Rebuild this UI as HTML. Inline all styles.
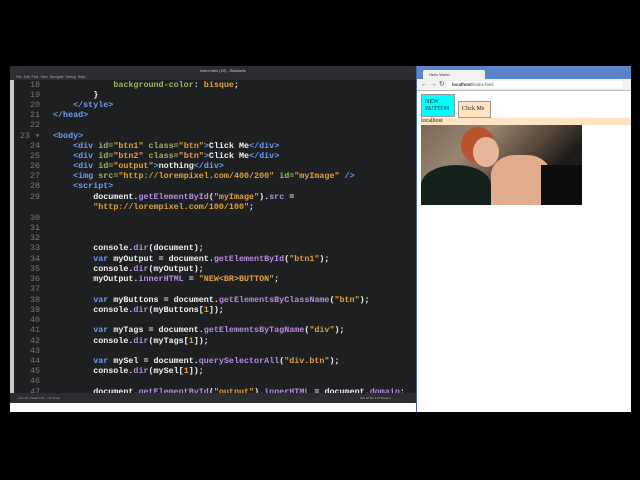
<!DOCTYPE html>
<html><head><style>
body{margin:0;width:640px;height:480px;background:#000;position:relative;overflow:hidden;font-family:"Liberation Sans",sans-serif}
#ed{position:absolute;left:10px;top:66px;width:406px;height:346px;background:#1d1f21;overflow:hidden}
#tb{position:absolute;left:0;top:0;width:406px;height:14px;background:#2b2d30}
#tb .t{position:absolute;left:190px;top:2px;font-size:4px;color:#ccc}
#tb .m{position:absolute;left:6px;top:9px;font-size:3.5px;color:#aaa;white-space:pre}
#side{position:absolute;left:0;top:14px;width:4px;height:313px;background:#c9cbcc}
#code{position:absolute;left:0;top:14px;width:406px;height:313px;overflow:hidden}
.l{position:absolute;left:0;font-family:"Liberation Mono",monospace;font-size:8.4px;white-space:pre;color:#f2f2f2;line-height:10px;font-weight:bold}
.n{position:absolute;width:30px;text-align:right;color:#777;font-family:"Liberation Mono",monospace;font-size:8.4px;line-height:10px}
.tg{color:#6c9ef8}.a{color:#9fb55a}.s{color:#e2a13e}.f{color:#b98ce0}.k{color:#6c9ef8}.o{color:#e2a13e}
#sb{position:absolute;left:0;top:327px;width:406px;height:10px;background:#2b2d30;font-size:3px;color:#aaa}
#bot{position:absolute;left:0;top:337px;width:406px;height:9px;background:#fff}
#br{position:absolute;left:416px;top:66px;width:214px;height:346px;background:#fff;border-left:1px solid #4466aa}
#tabs{position:absolute;left:0;top:0;width:214px;height:13px;background:#5b83c9}
#tab{position:absolute;left:6px;top:4px;width:62px;height:9px;background:#f2f2f2;border-radius:2px 2px 0 0;font-size:4px;color:#333;line-height:9px;padding-left:6px;box-sizing:border-box}
#url{position:absolute;left:0;top:13px;width:214px;height:11px;background:#f2f2f2;border-bottom:1px solid #bbb}
#urlbox{position:absolute;left:30px;top:2px;width:170px;height:7px;background:#fff;font-size:4.5px;line-height:7px;color:#555;padding-left:5px}
.btn{position:absolute;font-family:"Liberation Serif",serif;font-size:6px;color:#222;line-height:7px}
</style></head><body>
<div id="ed">
<div id="tb"><div class="t">index.html (20) - Brackets</div><div class="m">File  Edit  Find  View  Navigate  Debug  Help</div></div>
<div id="code">
<div class="n" style="left:0;top:0">18</div><div class="l" style="left:43px;top:0">            <span class="a">background-color</span>: <span class="s">bisque</span>;</div>
<div class="n" style="top:10px">19</div><div class="l" style="left:43px;top:10px">        }</div>
<div class="n" style="top:20px">20</div><div class="l" style="left:43px;top:20px">    <span class="tg">&lt;/style&gt;</span></div>
<div class="n" style="top:30px">21</div><div class="l" style="left:43px;top:30px"><span class="tg">&lt;/head&gt;</span></div>
<div class="n" style="top:40px">22</div>
<div class="n" style="top:51px">23 ▾</div><div class="l" style="left:43px;top:51px"><span class="tg">&lt;body&gt;</span></div>
<div class="n" style="top:61px">24</div><div class="l" style="left:43px;top:61px">    <span class="tg">&lt;div</span> <span class="a">id=</span><span class="s">"btn1"</span> <span class="a">class=</span><span class="s">"btn"</span><span class="tg">&gt;</span>Click Me<span class="tg">&lt;/div&gt;</span></div>
<div class="n" style="top:71px">25</div><div class="l" style="left:43px;top:71px">    <span class="tg">&lt;div</span> <span class="a">id=</span><span class="s">"btn2"</span> <span class="a">class=</span><span class="s">"btn"</span><span class="tg">&gt;</span>Click Me<span class="tg">&lt;/div&gt;</span></div>
<div class="n" style="top:81px">26</div><div class="l" style="left:43px;top:81px">    <span class="tg">&lt;div</span> <span class="a">id=</span><span class="s">"output"</span><span class="tg">&gt;</span>nothing<span class="tg">&lt;/div&gt;</span></div>
<div class="n" style="top:91px">27</div><div class="l" style="left:43px;top:91px">    <span class="tg">&lt;img</span> <span class="a">src=</span><span class="s">"http://lorempixel.com/400/200"</span> <span class="a">id=</span><span class="s">"myImage"</span> <span class="tg">/&gt;</span></div>
<div class="n" style="top:101px">28</div><div class="l" style="left:43px;top:101px">    <span class="tg">&lt;script&gt;</span></div>
<div class="n" style="top:112px">29</div><div class="l" style="left:43px;top:112px">        document.<span class="f">getElementById</span>(<span class="s">"myImage"</span>).<span class="f">src</span> =
        <span class="s">"http://lorempixel.com/100/100"</span>;</div>
<div class="n" style="top:133px">30</div>
<div class="n" style="top:143px">31</div>
<div class="n" style="top:153px">32</div>
<div class="n" style="top:163px">33</div><div class="l" style="left:43px;top:163px">        console.<span class="f">dir</span>(document);</div>
<div class="n" style="top:174px">34</div><div class="l" style="left:43px;top:174px">        <span class="k">var</span> myOutput = document.<span class="f">getElementById</span>(<span class="s">"btn1"</span>);</div>
<div class="n" style="top:184px">35</div><div class="l" style="left:43px;top:184px">        console.<span class="f">dir</span>(myOutput);</div>
<div class="n" style="top:194px">36</div><div class="l" style="left:43px;top:194px">        myOutput.<span class="f">innerHTML</span> = <span class="s">"NEW&lt;BR&gt;BUTTON"</span>;</div>
<div class="n" style="top:204px">37</div>
<div class="n" style="top:215px">38</div><div class="l" style="left:43px;top:215px">        <span class="k">var</span> myButtons = document.<span class="f">getElementsByClassName</span>(<span class="s">"btn"</span>);</div>
<div class="n" style="top:225px">39</div><div class="l" style="left:43px;top:225px">        console.<span class="f">dir</span>(myButtons[<span class="o">1</span>]);</div>
<div class="n" style="top:235px">40</div>
<div class="n" style="top:245px">41</div><div class="l" style="left:43px;top:245px">        <span class="k">var</span> myTags = document.<span class="f">getElementsByTagName</span>(<span class="s">"div"</span>);</div>
<div class="n" style="top:256px">42</div><div class="l" style="left:43px;top:256px">        console.<span class="f">dir</span>(myTags[<span class="o">1</span>]);</div>
<div class="n" style="top:266px">43</div>
<div class="n" style="top:276px">44</div><div class="l" style="left:43px;top:276px">        <span class="k">var</span> mySel = document.<span class="f">querySelectorAll</span>(<span class="s">"div.btn"</span>);</div>
<div class="n" style="top:286px">45</div><div class="l" style="left:43px;top:286px">        console.<span class="f">dir</span>(mySel[<span class="o">1</span>]);</div>
<div class="n" style="top:296px">46</div>
<div class="n" style="top:307px">47</div><div class="l" style="left:43px;top:307px">        document.<span class="f">getElementById</span>(<span class="s">"output"</span>).<span class="f">innerHTML</span> = document.<span class="f">domain</span>;</div>
</div>
<div id="side"></div>
<div id="sb"><span style="position:absolute;left:8px;top:3px">Line 29, Column 33 — 51 Lines</span><span style="position:absolute;left:350px;top:3px">INS  HTML ▾  ⚙  Spaces</span></div>
<div id="bot"></div>
</div>
<div id="br">
<div id="tabs"><div id="tab">Hello World</div></div>
<div id="url"><span style="position:absolute;left:4px;top:1px;font-size:7px;color:#555">← → ↻</span><div id="urlbox"><b style="color:#333">localhost</b>/index.html</div></div>
<div style="position:absolute;left:4px;top:28px;width:34px;height:23px;background:#00ffff;border:1px solid #999;box-sizing:border-box"></div>
<div class="btn" style="left:8px;top:33px">NEW<br>BUTTON</div>
<div style="position:absolute;left:41px;top:35px;width:33px;height:17px;background:#ffe4c4;border:1px solid #999;box-sizing:border-box"></div>
<div class="btn" style="left:45px;top:40px">Click Me</div>
<div style="position:absolute;left:4px;top:52px;width:210px;height:7px;background:#ffe4c4"></div>
<div class="btn" style="left:4px;top:52px">localhost</div>
<div style="position:absolute;left:4px;top:59px;width:161px;height:80px;background:linear-gradient(135deg,#7a6858 0%,#9a8670 30%,#5a4a3c 55%,#1a1a18 75%,#2a2a24 100%);overflow:hidden">
<div style="position:absolute;left:40px;top:2px;width:34px;height:36px;border-radius:50%;background:#b8532e"></div>
<div style="position:absolute;left:52px;top:12px;width:26px;height:30px;border-radius:50%;background:#e7b69a"></div>
<div style="position:absolute;left:70px;top:30px;width:60px;height:50px;border-radius:40% 40% 0 0;background:#e2ad8f"></div>
<div style="position:absolute;left:0;top:40px;width:70px;height:40px;border-radius:50% 50% 0 0;background:#14201b"></div>
<div style="position:absolute;left:120px;top:40px;width:41px;height:40px;background:#0d0d0d"></div>
</div>
</div>
</body></html>
